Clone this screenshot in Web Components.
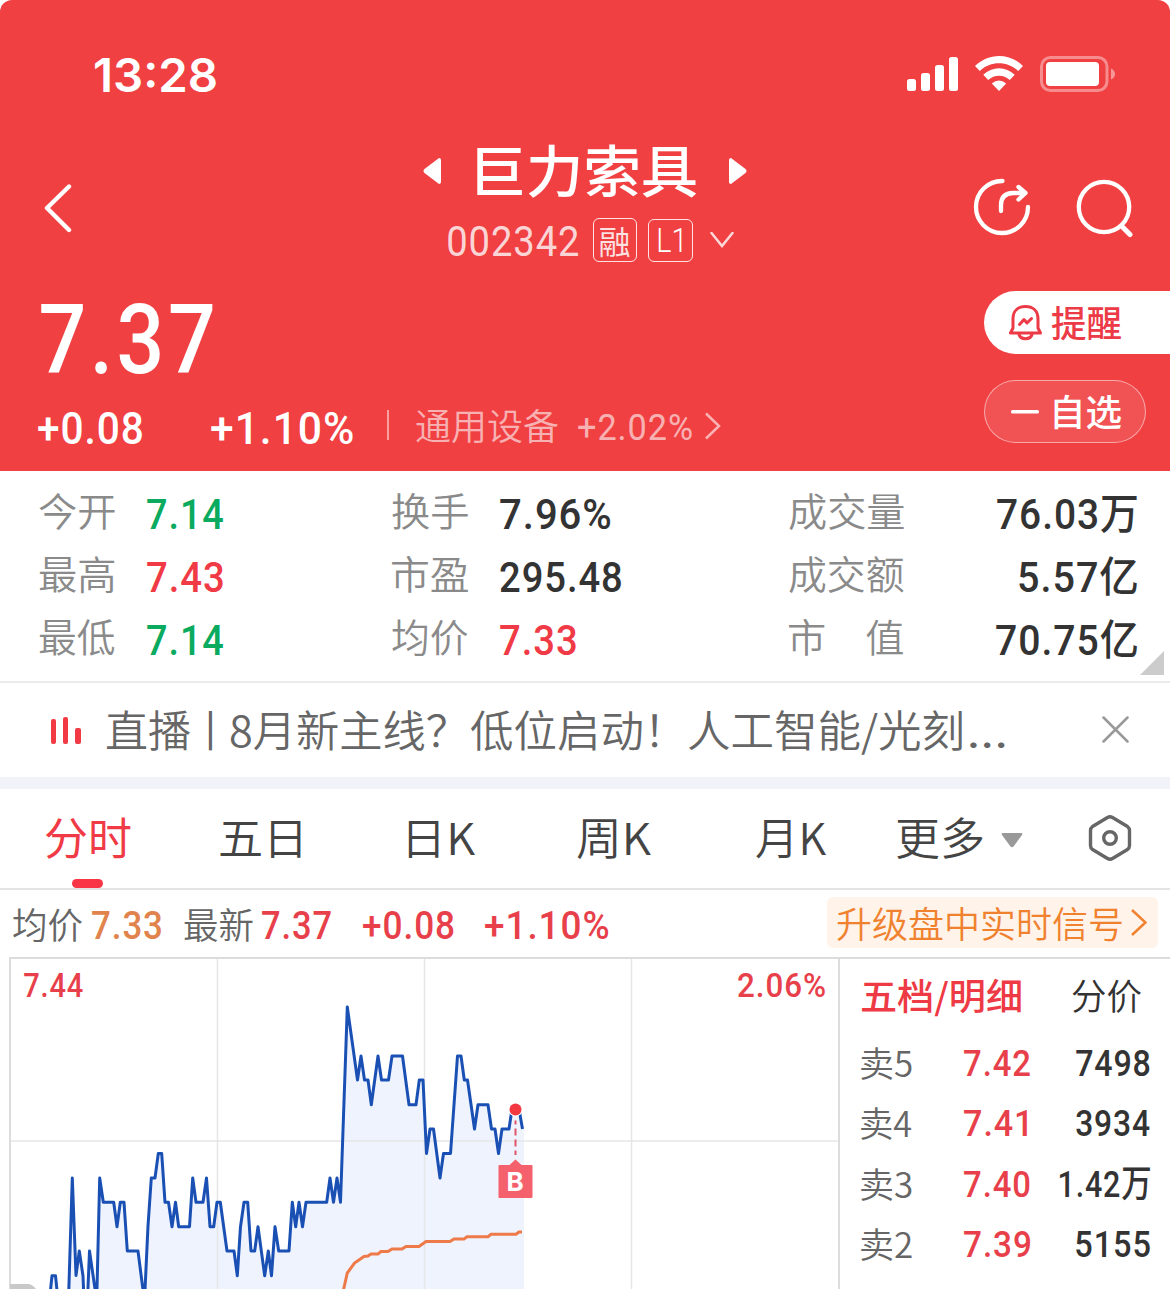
<!DOCTYPE html>
<html lang="zh-CN">
<head>
<meta charset="utf-8">
<title>巨力索具 002342</title>
<style>
html,body{
    margin: 0;
    background: #fff;
}
body{
    width: 1170px;
    height: 1289px;
    overflow: hidden;
}
</style>
</head>
<body>
<stock-app></stock-app>

<script>
// one line of text fitted to a given ink width
class FitText extends HTMLElement{
    constructor(){
        super();
        this.attachShadow({mode:'open'})
        this.shadowRoot.innerHTML=`
<style>
:host{
    display: block;
    flex: none;
    line-height: 1;
    font-family: Roboto, "Noto Sans CJK SC", sans-serif;
    font-weight: 500;
}
:host([cn]){
    font-family: "Noto Sans CJK SC", sans-serif;
    font-weight: 350;
}
span{
    display: block;
    width: max-content;
    white-space: pre;
    transform-origin: 0 0;
}
</style>
<span><slot></slot></span>`
    }
    connectedCallback(){
        const w=Number(this.getAttribute('w'))
        this.style.width=w+'px'
        const cs=getComputedStyle(this)
        const ctx=document.createElement('canvas').getContext('2d')
        ctx.font=`${cs.fontWeight} ${cs.fontSize} ${cs.fontFamily}`
        if(cs.letterSpacing!=='normal') ctx.letterSpacing=cs.letterSpacing
        const m=ctx.measureText(this.textContent)
        const s=w/(m.actualBoundingBoxLeft+m.actualBoundingBoxRight)
        const dy=this.hasAttribute('cn') ? '-.065em' : '0px'
        this.shadowRoot.querySelector('span').style.transform=
            `translate(${s*m.actualBoundingBoxLeft}px, ${dy}) scaleX(${s})`
    }
}
customElements.define('fit-text',FitText)

function define(name,html){
    const template=document.createElement('template')
    template.innerHTML=html
    customElements.define(name,class extends HTMLElement{
        constructor(){
            super();
            this.attachShadow({mode:'open'})
            this.shadowRoot.appendChild(template.content.cloneNode(true))
        }
    })
}

define('status-bar',`
<style>
:host{
    display: flex;
    align-items: center;
    height: 149px;
    padding: 0 55px 0 95px;
    box-sizing: border-box;
}
fit-text{
    font: 600 47px/1 Inter, sans-serif;
    margin-right: auto;
}
svg{ overflow: visible; }
</style>
<fit-text w="121">13:28</fit-text>
<svg width="208" height="37" viewBox="907 56 208 37" fill="#fff">
  <rect x="907" y="79" width="9" height="12" rx="2.5"/>
  <rect x="921" y="73" width="9" height="18" rx="2.5"/>
  <rect x="935" y="65" width="9" height="26" rx="2.5"/>
  <rect x="949" y="57" width="9" height="34" rx="2.5"/>
  <path d="M975 66 C988.500 52.500 1009.500 52.500 1023 66 L1018.200 71 C1007.500 60.700 990.500 60.700 979.800 71 Z"/>
  <path d="M983.300 74.700 C992 66 1006 66 1014.700 74.700 L1009.800 80 C1003.800 74.300 994.200 74.300 988.200 80 Z"/>
  <path d="M991.800 83.600 Q999 77.600 1006.200 83.600 L999 91 Z"/>
  <rect x="1041.500" y="57.500" width="65.500" height="33" rx="9" fill="none" stroke="#fff" stroke-width="3" opacity=".4"/>
  <rect x="1046" y="62" width="53" height="24" rx="4"/>
  <path d="M1111 68.500 Q1115 70.500 1115 74 Q1115 77.500 1111 79.500 Z" opacity=".45"/>
</svg>
`)

define('stock-nav',`
<style>
:host{
    display: flex;
    align-items: flex-start;
    height: 139px;
    padding: 0 36px 0 43px;
    box-sizing: border-box;
}
.back{ margin-top: 34px; }
.title{
    margin-left: 350px;
    display: flex;
    flex-direction: column;
    align-items: flex-start;
}
.name{
    display: flex;
    align-items: center;
    height: 44px;
}
.name fit-text{
    font-size: 56px;
    font-weight: 500;
    margin: 2px 32px 0 36px;
}
.code{
    display: flex;
    align-items: center;
    margin: 25px 0 0 25px;
    height: 44px;
}
.code > fit-text{
    font-size: 42px;
    font-weight: 400;
    letter-spacing: 1px;
    color: rgba(255,255,255,.8);
    margin-top: 4px;
}
.tag{
    box-sizing: border-box;
    display: flex;
    align-items: center;
    justify-content: center;
    border: 1.5px solid rgba(255,255,255,.85);
    border-radius: 6px;
    color: #fff;
}
.rong{
    width: 44px;
    height: 44px;
    margin-left: 13.500px;
}
.rong fit-text{
    font-size: 32px;
    font-weight: 400;
    margin-top: 3px;
    color: rgba(255,255,255,.85);
}
.l1{
    width: 45px;
    height: 43px;
    margin: 0 17px 0 11px;
}
.l1 fit-text{
    font-size: 33px;
    font-weight: 300;
}
.tools{
    display: flex;
    gap: 43px;
    margin: 29px 0 0 auto;
}
svg{ flex: none; }
</style>
<svg class="back" width="30" height="50" viewBox="43 183 30 50" fill="none" stroke="#fff" stroke-width="4.400" stroke-linecap="round" stroke-linejoin="round"><path d="M69 186.500 L47 208 L69 230"/></svg>
<div class="title">
  <div class="name">
    <svg width="18" height="28" viewBox="0 0 18 28" fill="#fff"><path d="M16 1 Q18 1 18 3 V25 Q18 27 16 27 L1.500 16 Q-.5 14 1.500 12 Z"/></svg>
    <fit-text cn w="220">巨力索具</fit-text>
    <svg width="18" height="28" viewBox="0 0 18 28" fill="#fff"><path d="M2 1 Q0 1 0 3 V25 Q0 27 2 27 L16.500 16 Q18.500 14 16.500 12 Z"/></svg>
  </div>
  <div class="code">
    <fit-text w="131">002342</fit-text>
    <span class="tag rong"><fit-text cn w="30">融</fit-text></span>
    <span class="tag l1"><fit-text w="24">L1</fit-text></span>
    <svg width="24" height="16" viewBox="0 0 24 16" fill="none" stroke="#fff" stroke-opacity=".8" stroke-width="2.500" stroke-linecap="round"><path d="M1.500 1 L12 14 L22.500 1"/></svg>
  </div>
</div>
<div class="tools">
  <svg width="58" height="60" viewBox="973 178 58 60" fill="none" stroke="#fff" stroke-width="4.300" stroke-linecap="round" stroke-linejoin="round">
    <path d="M1002.500 181 A26 26 0 1 0 1028 207"/>
    <path d="M1001 211 V205 Q1001 193.500 1013 193 H1025"/>
    <path d="M1018.500 187 L1025.500 193 L1018.500 199.500"/>
  </svg>
  <svg width="60" height="60" viewBox="1074 178 60 60" fill="none" stroke="#fff" stroke-width="4.300" stroke-linecap="round">
    <circle cx="1104" cy="207" r="25.200"/>
    <path d="M1122 226.500 L1130 234.500" stroke-width="5"/>
  </svg>
</div>
`)

define('stock-quote',`
<style>
:host{
    display: flex;
    justify-content: space-between;
    height: 183px;
}
.left{
    padding: 4px 0 0 38px;
}
.price{
    font-size: 97px;
    letter-spacing: 4px;
    margin-left: 3px;
}
.change{
    display: flex;
    align-items: center;
    height: 40px;
    margin-top: 18px;
}
.change fit-text{
    font-size: 44px;
    letter-spacing: 1px;
    margin-top: 3px;
}
.change .soft{
    font-size: 37px;
    font-weight: 400;
    letter-spacing: 1px;
    color: rgba(255,255,255,.6);
    margin-top: 0;
}
.change [cn]{
    font-size: 36px;
    letter-spacing: 0;
    color: rgba(255,255,255,.6);
    margin: -2px 20px 0 27px;
}
i{
    width: 1.500px;
    height: 30px;
    margin: -4px 0 0 34px;
    background: rgba(255,255,255,.5);
}
.right{
    padding-top: 3px;
    width: 186px;
}
.pill{
    box-sizing: border-box;
    display: flex;
    align-items: center;
    height: 63px;
}
.pill fit-text{
    font-size: 36px;
    font-weight: 500;
}
.remind{
    padding-left: 24px;
    background: #fff;
    color: #ec3a46;
    border-radius: 32px 0 0 32px;
}
.pick{
    width: 162px;
    margin-top: 26px;
    padding-left: 26px;
    background: rgba(255,255,255,.1);
    border: 1.5px solid rgba(255,255,255,.5);
    border-radius: 32px;
}
</style>
<div class="left">
  <fit-text class="price" w="172">7.37</fit-text>
  <div class="change">
    <fit-text w="104">+0.08</fit-text>
    <fit-text w="142" style="margin-left:69px">+1.10%</fit-text>
    <i></i>
    <fit-text cn w="142">通用设备</fit-text>
    <fit-text class="soft" w="114">+2.02%</fit-text>
    <svg style="margin:-2px 0 0 13px" width="16" height="28" viewBox="0 0 16 28" fill="none" stroke="#fff" stroke-opacity=".6" stroke-width="2.500"><path d="M1 1.500 L14 14 L1 26.500"/></svg>
  </div>
</div>
<div class="right">
  <div class="pill remind">
    <svg style="margin:-1px 8px 0 0" width="35" height="37" viewBox="1008.500 303 35 37" fill="none" stroke="#ec3a46" stroke-width="3" stroke-linecap="round" stroke-linejoin="round">
      <path d="M1011 332 H1041 L1038.500 327 V318 C1038.500 309.500 1033 305.500 1026 305.500 C1019 305.500 1013.500 309.500 1013.500 318 V327 Z"/>
      <path d="M1019.500 333.500 C1021 339 1031 339 1032.500 333.500"/>
      <path d="M1020 323.500 L1024.500 318.500 L1027.500 322 L1032 317.500"/>
    </svg>
    <fit-text cn w="70">提醒</fit-text>
  </div>
  <div class="pill pick">
    <svg style="margin-right:15px" width="28" height="4"><rect width="28" height="3.500" rx="1.500" fill="#fff"/></svg>
    <fit-text cn w="67">自选</fit-text>
  </div>
</div>
`)

define('stat-item',`
<style>
:host{
    display: flex;
    align-items: center;
    height: 63px;
}
::slotted([cn]){
    font-size: 38.5px;
    color: #8a8a8a;
    margin-top: -4px;
}
::slotted(:not([cn])){
    font-size: 42px;
    letter-spacing: 1px;
}
</style>
<slot></slot>
`)

define('stat-grid',`
<style>
:host{
    display: grid;
    grid-template-columns: 353px 397px 347.5px;
    grid-auto-rows: 63px;
    height: 212px;
    box-sizing: border-box;
    padding: 12px 0 0 39px;
    border-bottom: 2px solid #ebebeb;
    color: #333;
    position: relative;
}
stat-item{ gap: 32px; }
stat-item:nth-of-type(3n){
    justify-content: space-between;
}
.g{ color: #0aaa5f; }
.r{ color: #f03a46; }
.more{
    position: absolute;
    right: 6px;
    bottom: 6px;
}
</style>
<stat-item><fit-text cn w="76">今开</fit-text><fit-text class="g" w="76">7.14</fit-text></stat-item>
<stat-item><fit-text cn w="76">换手</fit-text><fit-text w="111">7.96%</fit-text></stat-item>
<stat-item><fit-text cn w="115">成交量</fit-text><fit-text w="140">76.03万</fit-text></stat-item>
<stat-item><fit-text cn w="76">最高</fit-text><fit-text class="r" w="76">7.43</fit-text></stat-item>
<stat-item><fit-text cn w="76">市盈</fit-text><fit-text w="121">295.48</fit-text></stat-item>
<stat-item><fit-text cn w="115">成交额</fit-text><fit-text w="118">5.57亿</fit-text></stat-item>
<stat-item><fit-text cn w="76">最低</fit-text><fit-text class="g" w="76">7.14</fit-text></stat-item>
<stat-item><fit-text cn w="76">均价</fit-text><fit-text class="r" w="76">7.33</fit-text></stat-item>
<stat-item><fit-text cn w="114">市　值</fit-text><fit-text w="141">70.75亿</fit-text></stat-item>
<svg class="more" width="24" height="24"><path d="M24 0 V24 H0 Z" fill="#ccc"/></svg>
`)

define('live-bar',`
<style>
:host{
    display: flex;
    align-items: center;
    height: 94px;
    padding: 0 41px 0 51px;
    border-bottom: 12px solid #f2f3f8;
}
.text{
    display: flex;
    margin: 3px auto 0 26px;
}
fit-text{
    font-size: 43px;
    color: #666;
}
</style>
<svg width="30" height="28" viewBox="51 717 30 28" fill="#f23a45" style="margin-top:2px">
  <rect x="51" y="719" width="5" height="25" rx="2"/>
  <rect x="63" y="717" width="5" height="27" rx="2"/>
  <rect x="75" y="728" width="6" height="16" rx="2"/>
</svg>
<div class="text">
  <fit-text cn w="83">直播</fit-text>
  <fit-text cn w="4" style="margin-left:18px">丨</fit-text>
  <fit-text cn w="216" style="margin-left:18px">8月新主线？</fit-text>
  <fit-text cn w="188" style="margin-left:24px">低位启动！</fit-text>
  <fit-text cn w="274" style="margin-left:30px">人工智能/光刻</fit-text>
  <fit-text cn w="35" style="margin-left:8px">...</fit-text>
</div>
<svg width="27" height="27" viewBox="0 0 27 27" fill="none" stroke="#999" stroke-width="2.500" stroke-linecap="round" style="margin-top:-2px"><path d="M1.500 1.500 L25.500 25.500 M25.500 1.500 L1.500 25.500"/></svg>
`)

define('chart-tabs',`
<style>
:host{
    display: flex;
    align-items: center;
    height: 99px;
    padding: 0 38px 0 45px;
    border-bottom: 2px solid #e4e4e4;
    color: #444;
}
fit-text{
    font-size: 44px;
    margin-top: 1px;
}
.on{
    position: relative;
    color: #f03a46;
}
.on fit-text{ font-weight: 400; }
.on i{
    position: absolute;
    left: 27px;
    top: 63px;
    width: 31px;
    height: 9px;
    border-radius: 5px;
    background: #fa3545;
}
.gear{ margin: -2px 0 0 auto; }
</style>
<div class="on"><fit-text cn w="86">分时</fit-text><i></i></div>
<fit-text cn w="81" style="margin-left:89px">五日</fit-text>
<fit-text cn w="67" style="margin-left:107px">日K</fit-text>
<fit-text cn w="74" style="margin-left:102px">周K</fit-text>
<fit-text cn w="70" style="margin-left:105px">月K</fit-text>
<fit-text cn w="86" style="margin-left:71px">更多</fit-text>
<svg width="22" height="15" viewBox="0 0 22 15" fill="#999" style="margin:3px 0 0 18px"><path d="M1.500 0 H20.500 Q22 0 21 2 L12.500 13.500 Q11 15 9.500 13.500 L1 2 Q0 0 1.500 0 Z"/></svg>
<svg class="gear" width="44" height="48" viewBox="1088.500 814 44 48" fill="none" stroke="#666" stroke-width="3.400" stroke-linejoin="round">
  <path d="M1108 817.500 Q1110.500 816 1113 817.500 L1128 826.500 Q1130 828 1130 830.500 V845.500 Q1130 848 1128 849.500 L1113 858.500 Q1110.500 860 1108 858.500 L1093 849.500 Q1091 848 1091 845.500 V830.500 Q1091 828 1093 826.500 Z"/>
  <circle cx="1110.500" cy="838" r="6.300"/>
</svg>
`)

define('price-strip',`
<style>
:host{
    display: flex;
    align-items: center;
    height: 67px;
    padding: 0 12px 0 13px;
    color: #e8404a;
}
fit-text{
    font-size: 39px;
    letter-spacing: 1px;
    margin-top: 5px;
}
[cn]{
    font-size: 36px;
    letter-spacing: 0;
    color: #666;
    margin-top: 2px;
}
.badge{
    display: flex;
    align-items: center;
    justify-content: space-between;
    box-sizing: border-box;
    width: 331px;
    height: 51px;
    margin: -2px 0 0 auto;
    padding: 0 11px 0 10px;
    border-radius: 6px;
    background: #fff3ea;
}
.badge fit-text{ color: #f0822f; margin-top: 3px; }
</style>
<fit-text cn w="69">均价</fit-text>
<fit-text w="69" style="margin-left:10px;color:#e0834c">7.33</fit-text>
<fit-text cn w="69" style="margin-left:23px">最新</fit-text>
<fit-text w="69" style="margin-left:9px">7.37</fit-text>
<fit-text w="91" style="margin-left:32px">+0.08</fit-text>
<fit-text w="123" style="margin-left:31px">+1.10%</fit-text>
<div class="badge">
  <fit-text cn w="285">升级盘中实时信号</fit-text>
  <svg width="16" height="27" viewBox="0 0 16 27" fill="none" stroke="#f0822f" stroke-width="2.500"><path d="M1 1 L14.500 13.500 L1 26"/></svg>
</div>
`)

// minute chart, drawn in page coordinates
class MinuteChart extends HTMLElement{
    constructor(){
        super();
        this.attachShadow({mode:'open'})
        const price='50,1295 52,1275.7 55.5,1275.7 58,1300 68.5,1300 72.3,1178 76,1275.5 79.3,1251 83,1276 84,1300 87.5,1300 89.5,1251 95,1289 97,1289 99.7,1178 103.3,1202.3 113.7,1202.3 117,1226.7 120.3,1202.3 124,1202.3 127.3,1251 138,1251 143,1290 145,1290 148,1226 151.3,1178 155,1178 158.3,1153.5 161.7,1153.5 165,1202.3 168.5,1202.3 172,1226.7 175.5,1202.3 178.7,1226.7 189.5,1226.7 192.7,1178 196,1202.3 203,1202.3 206.5,1178 210,1226.7 213.7,1226.7 217,1202.3 220.3,1202.3 227,1251 234,1251 237.3,1275.7 240.5,1226.7 244,1202.3 247.7,1202.3 251,1251 254.7,1251 258,1226.7 264.7,1275.7 268.3,1251 271.5,1275.7 275,1226.7 278.7,1251 289,1251 292.3,1202.3 295.7,1226.7 299,1202.3 302.5,1226.7 306,1202.3 326.7,1202.3 330,1178 333.5,1202.3 337,1178 340.5,1202.3 347.3,1007 357.5,1080 361,1056 364.5,1080 368,1080 371.3,1104.7 378,1056 381.5,1080 388.5,1080 392,1056 402.5,1056 409,1104.7 416,1104.7 419.3,1080 423,1080 426.5,1153.5 430,1129 433.5,1129 440,1178 443.5,1153.5 450.5,1153.5 457.500,1056 461,1056 464.3,1080 467.5,1080 474.5,1129 478,1104.7 488,1104.7 491.5,1129 495,1129 498.5,1153.5 502,1129 509,1129 512,1109 519,1109 522.5,1129'
        const avg='343,1292 347.3,1273 354.5,1263 364,1256.5 368,1256 371,1254 378,1254 381,1251.5 388,1251.5 392,1249 402,1249 406,1246.5 419,1246.5 426,1241.5 450,1241.5 454,1239 464,1239 467,1236.7 488,1236.7 491,1234.3 516,1234.3 519,1232 522,1232'
        this.shadowRoot.innerHTML=`
<style>
:host{
    display: block;
    position: relative;
    width: 840px;
    height: 332px;
    overflow: hidden;
}
svg{ display: block; }
.scale{
    position: absolute;
    left: 24px;
    right: 15px;
    top: 11px;
    display: flex;
    justify-content: space-between;
}
fit-text{
    font-size: 34px;
    letter-spacing: 1px;
    color: #e8404a;
}
.buy{
    position: absolute;
    left: 507.500px;
    top: 212px;
    color: #fff;
    font: 700 26px/1 Inter, sans-serif;
}
</style>
<svg width="840" height="332" viewBox="0 957 840 332" fill="none">
  <polygon points="${price} 524,1129 524,1300 50,1300" fill="#eef3fe"/>
  <path d="M217.500 958 V1289 M424.500 958 V1289 M631.500 958 V1289 M10 1141 H839" stroke="#e6e6e6" stroke-width="1.500"/>
  <path d="M10 1289 V958 H840 M839 958 V1289" stroke="#dcdcdc" stroke-width="2"/>
  <path d="M10 1284 H28 Q32 1284 36 1289 H10 Z" fill="#c9c9c9"/>
  <polyline points="${avg}" stroke="#ee7a49" stroke-width="3"/>
  <polyline points="${price}" stroke="#1a50b4" stroke-width="3" stroke-linejoin="round"/>
  <circle cx="515.500" cy="1109.500" r="7" fill="#fff"/>
  <circle cx="515.500" cy="1109.500" r="6" fill="#f43842"/>
  <path d="M515.500 1120.500 V1155" stroke="#e05468" stroke-width="2" stroke-dasharray="7 4" stroke-dashoffset="3"/>
  <path d="M499.500 1165 H509.500 L515.500 1159.500 L521.500 1165 H531.500 Q532.500 1165 532.500 1166 V1197 Q532.500 1198 531.500 1198 H499.500 Q498.500 1198 498.500 1197 V1166 Q498.500 1165 499.500 1165 Z" fill="#f4606b"/>
</svg>
<div class="scale"><fit-text w="59">7.44</fit-text><fit-text w="87">2.06%</fit-text></div>
<fit-text class="buy" w="16">B</fit-text>
`
    }
}
customElements.define('minute-chart',MinuteChart)

define('order-row',`
<style>
:host{
    display: flex;
    align-items: center;
    height: 60.5px;
    padding-right: 20px;
}
::slotted(*){
    font-size: 37px;
    letter-spacing: 1px;
}
::slotted([slot=name]){
    font-size: 35px;
    letter-spacing: 0;
    color: #666;
}
::slotted([slot=price]){
    color: #e8404a;
    margin-left: 52px;
}
::slotted([slot=count]){
    color: #333;
    margin-left: auto;
}
</style>
<slot name="name"></slot><slot name="price"></slot><slot name="count"></slot>
`)

define('order-book',`
<style>
:host{
    display: block;
    flex: 1;
    border-top: 2px solid #dcdcdc;
    padding-left: 21px;
    overflow: hidden;
}
.head{
    display: flex;
    align-items: center;
    height: 74px;
    gap: 51px;
}
.head fit-text{
    font-size: 36px;
    color: #333;
    margin-top: -1px;
}
.head .on{
    font-weight: 500;
    color: #ee3a45;
}
</style>
<div class="head"><fit-text class="on" cn w="160">五档/明细</fit-text><fit-text cn w="69">分价</fit-text></div>
<order-row><fit-text slot="name" cn w="51">卖5</fit-text><fit-text slot="price" w="66">7.42</fit-text><fit-text slot="count" w="74">7498</fit-text></order-row>
<order-row><fit-text slot="name" cn w="51">卖4</fit-text><fit-text slot="price" w="63">7.41</fit-text><fit-text slot="count" w="74">3934</fit-text></order-row>
<order-row><fit-text slot="name" cn w="51">卖3</fit-text><fit-text slot="price" w="66">7.40</fit-text><fit-text slot="count" w="90">1.42万</fit-text></order-row>
<order-row><fit-text slot="name" cn w="51">卖2</fit-text><fit-text slot="price" w="66">7.39</fit-text><fit-text slot="count" w="74">5155</fit-text></order-row>
`)

define('stock-app',`
<style>
:host{
    display: flex;
    flex-direction: column;
    width: 1170px;
    height: 1289px;
    overflow: hidden;
}
header{
    height: 471px;
    background: #f04042;
    color: #fff;
    border-radius: 12px 12px 0 0;
}
.board{
    display: flex;
    height: 332px;
}
</style>
<header>
  <status-bar></status-bar>
  <stock-nav></stock-nav>
  <stock-quote></stock-quote>
</header>
<stat-grid></stat-grid>
<live-bar></live-bar>
<chart-tabs></chart-tabs>
<price-strip></price-strip>
<div class="board">
  <minute-chart></minute-chart>
  <order-book></order-book>
</div>
`)
</script>
</body>
</html>
